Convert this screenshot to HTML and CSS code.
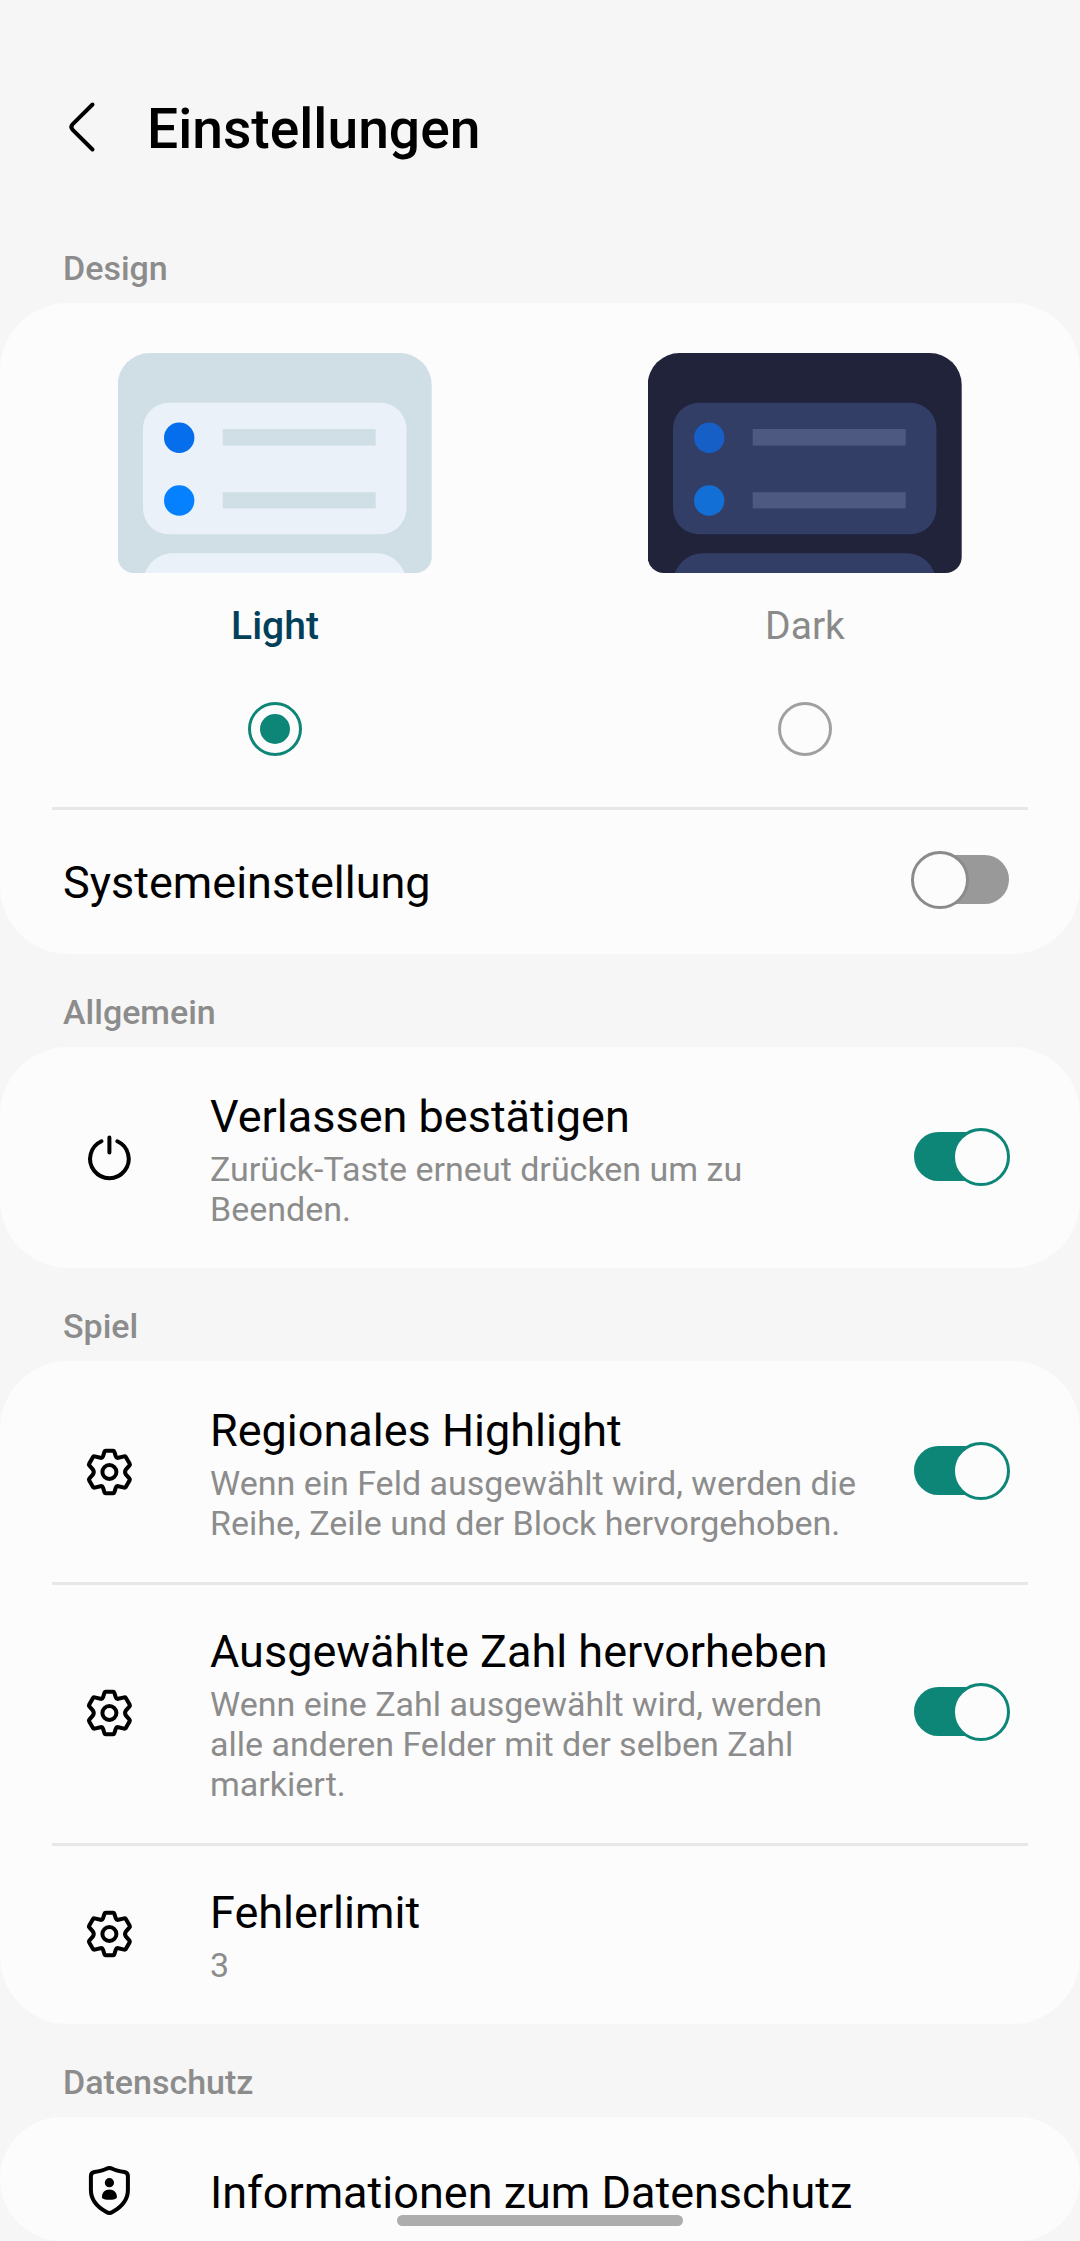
FILE: index.html
```html
<!DOCTYPE html>
<html lang="de">
<head>
<meta charset="utf-8">
<title>Einstellungen</title>
<link rel="stylesheet" href="styles.css">
</head>
<body>
<svg class="defs" width="0" height="0" aria-hidden="true">
  <symbol id="gear" viewBox="-0.4 0 60 60">
    <path d="M26.3 8.7H33.7Q34.6 8.7 34.9 9.6L36.4 14.4Q37 16.2 38.9 15.8L44.8 14.4Q45.8 14.2 46.4 15L50.2 21.6Q50.8 22.6 50.1 23.4L46.4 27.6Q44.9 30 46.4 32.4L50.1 36.6Q50.8 37.4 50.2 38.4L46.4 45Q45.8 45.8 44.8 45.6L38.9 44.2Q37 43.8 36.4 45.6L34.9 50.4Q34.6 51.3 33.7 51.3H26.3Q25.4 51.3 25.1 50.4L23.6 45.6Q23 43.8 21.1 44.2L15.2 45.6Q14.2 45.8 13.6 45L9.8 38.4Q9.2 37.4 9.9 36.6L13.6 32.4Q15.1 30 13.6 27.6L9.9 23.4Q9.2 22.6 9.8 21.6L13.6 15Q14.2 14.2 15.2 14.4L21.1 15.8Q23 16.2 23.6 14.4L25.1 9.6Q25.4 8.7 26.3 8.7Z"/>
    <circle cx="30" cy="30" r="7"/>
  </symbol>
</svg>
<header class="header">
  <svg class="back" width="30" height="54" viewBox="0 0 30 54"><path d="M25.5 4.5 5.7 24.2Q3 27 5.7 29.8L25.5 49.5"/></svg>
  <h1 class="title">Einstellungen</h1>
</header>
<main>
  <h2 class="section">Design</h2>
  <section class="card">
    <div class="themes">
      <div class="theme theme-light">
        <svg class="preview" width="314" height="220" viewBox="0.3 0 314 220">
          <path class="p-bg" d="M32 0H282A32 32 0 0 1 314 32V204A16 16 0 0 1 298 220H16A16 16 0 0 1 0 204V32A32 32 0 0 1 32 0Z"/>
          <rect class="p-card" x="25.3" y="49.7" width="263.4" height="131.6" rx="26"/>
          <path class="p-card" d="M27 220Q36 200.3 56 200.3H258Q278 200.3 287 220Z"/>
          <circle class="p-dot1" cx="61.5" cy="84.7" r="15.2"/><circle class="p-dot2" cx="61.5" cy="147.5" r="15.2"/>
          <rect class="p-bar" x="105" y="76" width="153" height="16.6"/><rect class="p-bar" x="105" y="139.2" width="153" height="16.2"/>
        </svg>
        <span class="theme-name">Light</span>
        <span class="radio"></span>
      </div>
      <div class="theme theme-dark">
        <svg class="preview" width="314" height="220" viewBox="0.3 0 314 220">
          <path class="p-bg" d="M32 0H282A32 32 0 0 1 314 32V204A16 16 0 0 1 298 220H16A16 16 0 0 1 0 204V32A32 32 0 0 1 32 0Z"/>
          <rect class="p-card" x="25.3" y="49.7" width="263.4" height="131.6" rx="26"/>
          <path class="p-card" d="M27 220Q36 200.3 56 200.3H258Q278 200.3 287 220Z"/>
          <circle class="p-dot1" cx="61.5" cy="84.7" r="15.2"/><circle class="p-dot2" cx="61.5" cy="147.5" r="15.2"/>
          <rect class="p-bar" x="105" y="76" width="153" height="16.6"/><rect class="p-bar" x="105" y="139.2" width="153" height="16.2"/>
        </svg>
        <span class="theme-name">Dark</span>
        <span class="radio"></span>
      </div>
    </div>
    <div class="system">
      <span class="row-title">Systemeinstellung</span>
      <span class="switch off"></span>
    </div>
  </section>

  <h2 class="section">Allgemein</h2>
  <section class="card">
    <div class="row">
      <svg class="icon" viewBox="-0.4 0 60 60"><path d="M22.1 13.3A19.3 19.3 0 1 0 37.9 13.3M30 9.5V24.6"/></svg>
      <div class="text"><div class="row-title">Verlassen bestätigen</div><div class="sub">Zurück-Taste erneut drücken um zu<br>Beenden.</div></div>
      <span class="switch"></span>
    </div>
  </section>

  <h2 class="section">Spiel</h2>
  <section class="card">
    <div class="row">
      <svg class="icon"><use href="#gear"/></svg>
      <div class="text"><div class="row-title">Regionales Highlight</div><div class="sub">Wenn ein Feld ausgewählt wird, werden die<br>Reihe, Zeile und der Block hervorgehoben.</div></div>
      <span class="switch"></span>
    </div>
    <div class="row">
      <svg class="icon"><use href="#gear"/></svg>
      <div class="text"><div class="row-title">Ausgewählte Zahl hervorheben</div><div class="sub">Wenn eine Zahl ausgewählt wird, werden<br>alle anderen Felder mit der selben Zahl<br>markiert.</div></div>
      <span class="switch"></span>
    </div>
    <div class="row">
      <svg class="icon"><use href="#gear"/></svg>
      <div class="text"><div class="row-title">Fehlerlimit</div><div class="sub">3</div></div>
    </div>
  </section>

  <h2 class="section">Datenschutz</h2>
  <section class="card card-last">
    <div class="row row-single">
      <svg class="icon" viewBox="-0.4 0 60 60"><path d="M30 7.9Q31.5 7.9 33 8.8Q37 10.9 45 12Q48.5 12.6 48.5 16V30Q48.5 43.5 33 52Q30 53.8 27 52Q11.5 43.5 11.5 30V16Q11.5 12.6 15 12Q23 10.9 27 8.8Q28.5 7.9 30 7.9Z"/><g class="solid"><circle cx="30" cy="22.7" r="4.6"/><path d="M22.5 37.2C22.5 32.5 25.5 29.5 30 29.5S37.5 32.5 37.5 37.2C37.5 40.7 22.5 40.7 22.5 37.2Z"/></g></svg>
      <div class="row-title">Informationen zum Datenschutz</div>
    </div>
  </section>
</main>
<div class="home-bar"></div>
</body>
</html>
```
FILE: styles.css
```css
*, *::before, *::after { box-sizing: border-box; }
body {
  margin: 0;
  width: 1080px;
  height: 2241px;
  overflow: hidden;
  background: #f6f6f6;
  color: #000;
  font-family: Roboto, "Noto Sans", sans-serif;
}
.defs { position: absolute; }
.header {
  display: flex;
  height: 234px;
  padding: 97px 0 0 67px;
}
.back { margin-top: 3px; fill: none; stroke: #000; stroke-width: 4; stroke-linecap: round; }
.title { margin: 0 0 0 50px; font-size: 55.2px; line-height: 65px; font-weight: 500; }
.section {
  margin: 0;
  height: 93px;
  padding: 38px 63px 0;
  font-size: 34px;
  line-height: 40px;
  font-weight: 500;
  color: #8c8c8c;
}
.section:first-child { height: 69px; padding-top: 14px; }
.card { background: #fcfcfc; border-radius: 68px; }

.themes { display: grid; grid-template-columns: 530px 530px; justify-content: center; height: 504px; padding-top: 50px; }
.theme { display: flex; flex-direction: column; align-items: center; }
.theme-name { margin-top: 30px; font-size: 39px; line-height: 46px; color: #8a8a8a; }
.theme-light .theme-name { color: #02405a; font-weight: 500; }
.radio {
  display: grid;
  place-items: center;
  width: 54px;
  height: 54px;
  margin-top: 53px;
  border: 3px solid #a0a0a0;
  border-radius: 50%;
}
.theme-light .radio { border-color: #0d8577; }
.theme-light .radio::after { content: ""; width: 30px; height: 30px; border-radius: 50%; background: #0d8577; }
.theme-light .p-bg, .theme-light .p-bar { fill: #d0dfe5; }
.theme-light .p-card { fill: #ebf1f9; }
.theme-light .p-dot1 { fill: #056eec; }
.theme-light .p-dot2 { fill: #0581ff; }
.theme-dark .p-bg { fill: #21233b; }
.theme-dark .p-card { fill: #333e66; }
.theme-dark .p-bar { fill: #4d5981; }
.theme-dark .p-dot1 { fill: #155fc6; }
.theme-dark .p-dot2 { fill: #126fd5; }

.system {
  display: flex;
  justify-content: space-between;
  height: 147px;
  padding: 44px 70px 0 63px;
  background: linear-gradient(#e7e7e7, #e7e7e7) 52px 0 / 976px 3px no-repeat;
}
.system .row-title { margin-top: 5px; }
.row {
  display: grid;
  grid-template-columns: 60px 1fr 99px;
  align-items: center;
  padding: 39px 70px 39px 79px;
}
.row + .row { background: linear-gradient(#e7e7e7, #e7e7e7) 52px 0 / 976px 3px no-repeat; }
.icon { width: 60px; height: 60px; fill: none; stroke: #000; stroke-width: 4; stroke-linecap: round; stroke-linejoin: round; }
.solid { fill: #000; stroke: none; }
.text { margin-left: 71px; padding-top: 4px; }
.row-title { font-size: 45px; line-height: 53px; white-space: nowrap; }
.sub { margin-top: 6px; font-size: 34px; line-height: 40px; color: #8c8c8c; white-space: nowrap; }

.switch { position: relative; width: 99px; height: 58px; }
.row .switch { margin-bottom: 1px; }
.switch::before, .switch::after { content: ""; position: absolute; }
.switch::before { left: 3px; top: 4px; width: 95px; height: 49px; border-radius: 25px; background: #0d8577; }
.switch::after { right: 0; top: 0; width: 58px; height: 58px; border: 3px solid #0d8577; border-radius: 50%; background: #fcfcfc; }
.switch.off::before { background: #999; }
.switch.off::after { right: auto; left: 0; border-color: #8b8b8b; }

.card-last { height: 124px; overflow: hidden; }
.row-single { padding-top: 43px; padding-bottom: 0; }
.row-single .row-title { margin-left: 71px; padding-top: 4px; }
.home-bar {
  position: absolute;
  left: 397px;
  top: 2215px;
  width: 286px;
  height: 11px;
  border-radius: 6px;
  background: #adadad;
}
```
